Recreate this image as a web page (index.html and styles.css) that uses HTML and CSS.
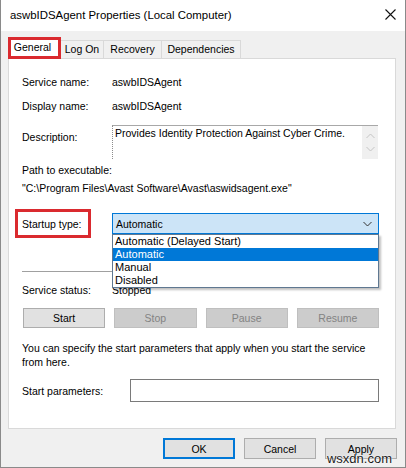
FILE: index.html
```html
<!DOCTYPE html>
<html lang="en">
<head>
  <meta charset="UTF-8" />
  <title>aswbIDSAgent Properties (Local Computer)</title>
  <link rel="stylesheet" href="styles.css">
</head>
<body>
  <div class="window">
    <div class="titlebar">
      <span class="title">aswbIDSAgent Properties (Local Computer)</span>
      <svg class="close" width="11" height="11" viewBox="0 0 11 11">
        <path d="M0.5 0.5 L10.5 10.5 M10.5 0.5 L0.5 10.5" stroke="#111" stroke-width="1.1" fill="none"/>
      </svg>
    </div>

    <!-- tab strip -->
    <div class="tabs">
      <div class="tab selected">General</div>
      <div class="tab logon">Log On</div>
      <div class="tab recovery">Recovery</div>
      <div class="tab deps">Dependencies</div>
    </div>

    <div class="panel">
      <div class="row first">
        <div class="label">Service name:</div>
        <div class="value">aswbIDSAgent</div>
      </div>
      <div class="row">
        <div class="label">Display name:</div>
        <div class="value">aswbIDSAgent</div>
      </div>
      <div class="row desc-row">
        <div class="label desc-label">Description:</div>
        <div class="textbox">
          <div class="textbox-text">Provides Identity Protection Against Cyber Crime.</div>
          <div class="scroll">
            <svg width="9" height="6" viewBox="0 0 9 6"><path d="M0.5 5 L4.5 1 L8.5 5" stroke="#c4c4c4" fill="none"/></svg>
            <svg width="9" height="6" viewBox="0 0 9 6"><path d="M0.5 1 L4.5 5 L8.5 1" stroke="#c4c4c4" fill="none"/></svg>
          </div>
        </div>
      </div>
      <div class="path-label">Path to executable:</div>
      <div class="path">"C:\Program Files\Avast Software\Avast\aswidsagent.exe"</div>

      <div class="row startup-row">
        <div class="label boxed">Startup type:</div>
        <div class="combo-wrap">
          <div class="combo">
            <span>Automatic</span>
            <svg width="9" height="6" viewBox="0 0 9 6"><path d="M0.5 1 L4.5 5 L8.5 1" stroke="#333" fill="none"/></svg>
          </div>
          <ul class="dropdown">
            <li>Automatic (Delayed Start)</li>
            <li class="active">Automatic</li>
            <li>Manual</li>
            <li>Disabled</li>
          </ul>
        </div>
      </div>

      <div class="separator"></div>

      <div class="row status-row">
        <div class="label">Service status:</div>
        <div class="value">Stopped</div>
      </div>

      <div class="actions">
        <button class="btn">Start</button>
        <button class="btn" disabled>Stop</button>
        <button class="btn" disabled>Pause</button>
        <button class="btn" disabled>Resume</button>
      </div>

      <p class="hint">You can specify the start parameters that apply when you start the service from here.</p>

      <div class="row params-row">
        <div class="label params-label">Start parameters:</div>
        <div class="input"></div>
      </div>
    </div>

    <div class="footer">
      <button class="btn dlg default">OK</button>
      <button class="btn dlg">Cancel</button>
      <button class="btn dlg">Apply</button>
    </div>

    <div class="mark">wsxdn.com</div>
  </div>
</body>
</html>
```

FILE: styles.css
```css
* {
  box-sizing: border-box;
}

body {
  margin: 0;
  background: #fff;
  font-family: "Liberation Sans", Arial, sans-serif;
  font-size: 10.5px;
  color: #000;
}

.window {
  position: relative;
  width: 406px;
  height: 468px;
  background: #f0f0f0;
  border: 1px solid #8a8a8a;
  border-top: none;
}

.titlebar {
  height: 31px;
  background: #fff;
  display: flex;
  align-items: center;
  justify-content: space-between;
  padding: 0 10px 2px 9px;
}

.title {
  font-size: 11.4px;
}

.close {
  margin-right: -1px;
}

/* tabs */
.tabs {
  display: flex;
  align-items: flex-end;
  height: 27px;
  padding-left: 7px;
  position: relative;
  z-index: 1;
}

.tab {
  height: 18px;
  margin-bottom: 0;
  border: 1px solid #d9d9d9;
  border-bottom: none;
  border-left: none;
  background: #f0f0f0;
  text-align: center;
  line-height: 17px;
}

.tab.selected {
  width: 53px;
  height: 22px;
  margin-bottom: -1px;
  background: #fff;
  border: 3px solid #da2a2f;
  line-height: 15px;
  padding-right: 4px;
}

.tab.logon { width: 43px; }
.tab.recovery { width: 58px; }
.tab.deps { width: 79px; }

.panel {
  margin: 0 9px 0 7px;
  height: 371px;
  background: #fff;
  border: 1px solid #d9d9d9;
  padding: 0 16px 0 13px;
}

.row {
  display: flex;
  align-items: center;
  line-height: 14px;
  margin-top: 10px;
}

.row.first {
  margin-top: 16px;
}

.label {
  width: 90px;
  flex: none;
}

.desc-row {
  align-items: flex-start;
  margin-top: 12px;
}

.desc-label {
  padding-top: 5px;
}

.textbox {
  flex: 1;
  height: 34px;
  display: flex;
  border-top: 1px solid #a8a8a8;
  border-left: 1px dotted #8c8c8c;
  margin-right: 1px;
}

.textbox-text {
  flex: 1;
  padding: 1px 2px;
  line-height: 13px;
}

.scroll {
  width: 16px;
  background: #f0f0f0;
  display: flex;
  flex-direction: column;
  justify-content: space-around;
  align-items: center;
  padding: 3px 0;
}

.path-label {
  margin-top: 4px;
  line-height: 14px;
}

.path {
  margin-top: 4px;
  line-height: 14px;
}

.startup-row {
  margin-top: 14px;
}

.label.boxed {
  width: 76px;
  height: 29px;
  margin-left: -7px;
  margin-right: 21px;
  padding-left: 4px;
  border: 3px solid #da2a2f;
  display: flex;
  align-items: center;
}

.combo-wrap {
  flex: 1;
  position: relative;
}

.combo {
  height: 21px;
  background: #cce4f7;
  border: 1px solid #0078d7;
  display: flex;
  align-items: center;
  justify-content: space-between;
  padding: 0 6px 0 3px;
}

/* opened list of the startup combo */
.dropdown {
  position: absolute;
  left: 0;
  right: 0;
  top: 100%;
  z-index: 2;
  margin: 0;
  padding: 0;
  list-style: none;
  background: #fff;
  border: 1px solid #5f7891;
  box-shadow: 2px 2px 2px rgba(0, 0, 0, 0.25);
}

.dropdown li {
  height: 13px;
  line-height: 13px;
  padding-left: 2px;
  font-size: 11px;
}

.dropdown li.active {
  background: #0078d7;
  color: #fff;
}

.separator {
  margin-top: 33px;
  border-top: 1px solid #a0a0a0;
}

.status-row {
  margin-top: 11px;
}

.actions {
  display: flex;
  gap: 9px;
  margin: 11px 0 0 1px;
}

.btn {
  font: inherit;
  height: 20px;
  padding: 0;
  background: #e1e1e1;
  border: 1px solid #adadad;
  color: #000;
}

.actions .btn {
  flex: 1;
}

.btn:disabled {
  background: #cccccc;
  border-color: #bfbfbf;
  color: #838383;
}

.hint {
  margin: 13px 0 0;
  line-height: 14px;
}

.params-row {
  margin-top: 10px;
}

.params-label {
  width: 108px;
}

.input {
  flex: 1;
  height: 23px;
  border: 1px solid #7a7a7a;
}

.footer {
  display: flex;
  justify-content: flex-end;
  gap: 9px;
  padding-right: 8px;
  margin-top: 9px;
}

.btn.dlg {
  width: 72px;
  height: 21px;
}

.btn.default {
  border: 2px solid #0078d7;
}

.mark {
  position: absolute;
  right: 13px;
  bottom: 1px;
  font-size: 13px;
  color: #1a1a1a;
  text-shadow: 0 0 2px #fff, 0 0 1px #fff;
}
```
